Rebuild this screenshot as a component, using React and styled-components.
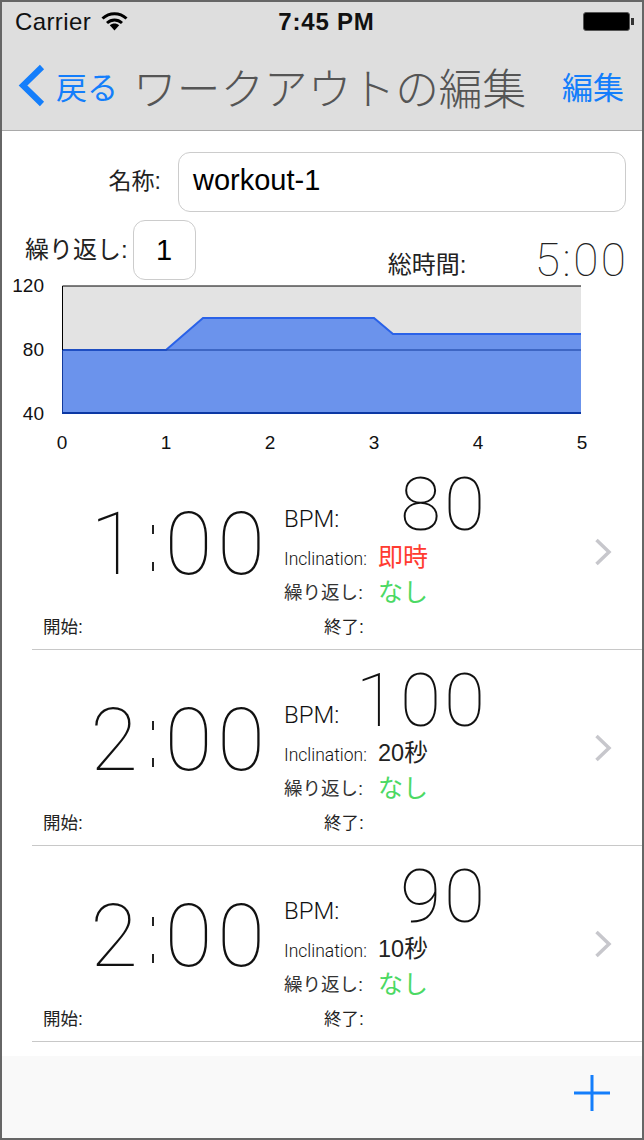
import React from "react";
import styled, { createGlobalStyle } from "styled-components";

const SANS = `"Liberation Sans", "Noto Sans CJK JP", sans-serif`;
const THIN = `Roboto, "Liberation Sans", sans-serif`;

const steps = [
  { time: "1", bpm: "80", incline: "即時", alert: true },
  { time: "2", bpm: "100", incline: "20秒" },
  { time: "2", bpm: "90", incline: "10秒" },
];

const App = () => {
  return (
    <Frame>
      <GlobalStyle />
      <Header>
        <StatusBar>
          <Carrier>
            Carrier
            <svg width="27" height="20" viewBox="0 0 27 20">
              <path d="M1.5 7.5C8.5 1 18.5 1 25.5 7.5" fill="none" stroke="#000" strokeWidth="3" />
              <path d="M6 12C10.5 8 16.5 8 21 12" fill="none" stroke="#000" strokeWidth="3" />
              <path d="M8.8 14.2C11.5 12 15.5 12 18.2 14.2L13.5 19.5Z" fill="#000" />
            </svg>
          </Carrier>
          <Clock>7:45 PM</Clock>
          <Battery />
        </StatusBar>
        <NavBar>
          <BackLink>
            <svg width="28" height="43" viewBox="0 0 28 43">
              <path d="M24 3L5 21.5L24 40" fill="none" stroke="#147efb" strokeWidth="6" />
            </svg>
            <span>戻る</span>
          </BackLink>
          <Title>ワークアウトの編集</Title>
          <EditLink>編集</EditLink>
        </NavBar>
      </Header>

      <Content>
        <NameRow>
          <Label>名称:</Label>
          <NameInput>workout-1</NameInput>
        </NameRow>
        <RepeatRow>
          <RepeatLabelWide>繰り返し:</RepeatLabelWide>
          <RepeatInput>1</RepeatInput>
          <TotalLabel>総時間:</TotalLabel>
          <TotalTime>5:00</TotalTime>
        </RepeatRow>
        <Chart />
        {steps.map((step, i) => (
          <StepRow key={i} {...step} />
        ))}
      </Content>

      <Toolbar>
        <svg width="36" height="36" viewBox="0 0 36 36">
          <path d="M18 0V36M0 18H36" stroke="#147efb" strokeWidth="3" />
        </svg>
      </Toolbar>
    </Frame>
  );
};

const Chart = () => {
  const ticks = [0, 1, 2, 3, 4, 5];
  return (
    <ChartSvg width="640" height="170" viewBox="0 0 640 170">
      <rect x="60" y="2" width="519" height="127" fill="#e3e3e3" />
      <path d="M60 66H164L201 34H372L391 50H579V129H60Z" fill="#6b93ec" />
      <path d="M60 66H164L201 34H372L391 50H579" fill="none" stroke="#2a62e8" strokeWidth="2" />
      <path d="M60 66H579" stroke="#123a9c" strokeWidth="1" />
      <path d="M60.5 2H579M60.5 2V66" fill="none" stroke="#000" strokeWidth="1" />
      <path d="M60.5 66V129" stroke="#123a9c" strokeWidth="1" />
      <path d="M60 129H579" stroke="#0b37a3" strokeWidth="2" />
      <AxisText x="42" y="8" textAnchor="end">120</AxisText>
      <AxisText x="42" y="72" textAnchor="end">80</AxisText>
      <AxisText x="42" y="136" textAnchor="end">40</AxisText>
      {ticks.map((t) => (
        <AxisText key={t} x={60 + t * 104} y="165" textAnchor="middle">
          {t}
        </AxisText>
      ))}
    </ChartSvg>
  );
};

const StepRow = ({ time, bpm, incline, alert }) => {
  return (
    <Row>
      <RowMain>
        <TimeText>
          {time}
          <TimeColon />
          00
        </TimeText>
        <Details>
          <BpmLine>
            <BpmLabel>BPM:</BpmLabel>
            <BpmValue>{bpm}</BpmValue>
          </BpmLine>
          <DetailLine>
            <InclineLabel>Inclination:</InclineLabel>
            <DetailValue $color={alert ? "#ff3b30" : "#222"} $small={!alert}>
              {incline}
            </DetailValue>
          </DetailLine>
          <DetailLine>
            <RepeatLabel>繰り返し:</RepeatLabel>
            <RepeatValue $color="#4cd964">なし</RepeatValue>
          </DetailLine>
        </Details>
        <Chevron width="18" height="28" viewBox="0 0 18 28">
          <path d="M2.5 2L15 14L2.5 26" fill="none" stroke="#c7c7cc" strokeWidth="3.5" />
        </Chevron>
      </RowMain>
      <RowFooter>
        <FooterLabel>開始:</FooterLabel>
        <FooterLabel>終了:</FooterLabel>
      </RowFooter>
    </Row>
  );
};

export default App;

// STYLES
const GlobalStyle = createGlobalStyle`
  html, body {
    margin: 0;
    padding: 0;
    background: #fff;
  }
`;

const Frame = styled.div`
  box-sizing: border-box;
  width: 644px;
  height: 1140px;
  border: 2px solid #666;
  display: flex;
  flex-direction: column;
  font-family: ${SANS};
  color: #111;
  overflow: hidden;
`;

const Header = styled.header`
  flex: none;
  box-sizing: border-box;
  height: 129px;
  background: #dedede;
  border-bottom: 1px solid #a9a9a9;
`;

const StatusBar = styled.div`
  height: 40px;
  padding: 0 10px 0 13px;
  display: grid;
  grid-template-columns: 1fr auto 1fr;
  align-items: center;
`;

const Carrier = styled.div`
  display: flex;
  align-items: center;
  gap: 10px;
  font-size: 24px;
  letter-spacing: 0.4px;
  svg {
    margin-top: -3px;
  }
`;

const Clock = styled.div`
  font-size: 24px;
  font-weight: 700;
  letter-spacing: 0.8px;
  margin-left: 6px;
`;

const Battery = styled.div`
  justify-self: end;
  position: relative;
  box-sizing: border-box;
  width: 47px;
  height: 19px;
  margin: -2px 2px 0 0;
  background: #000;
  border: 1px solid #555;
  border-radius: 3px;
  &::after {
    content: "";
    position: absolute;
    right: -5px;
    top: 5px;
    width: 3px;
    height: 7px;
    background: #333;
  }
`;

const NavBar = styled.nav`
  height: 87px;
  padding: 0 18px 0 16px;
  display: flex;
  align-items: center;
`;

const BackLink = styled.div`
  display: flex;
  align-items: center;
  gap: 10px;
  width: 115px;
  color: #147efb;
  font-size: 31px;
  white-space: nowrap;
`;

const Title = styled.h1`
  margin: 0;
  flex: 1;
  font-size: 43.7px;
  font-weight: 300;
  color: #555;
  white-space: nowrap;
`;

const EditLink = styled.div`
  color: #147efb;
  font-size: 31px;
`;

const Content = styled.main`
  flex: 1;
  background: #fff;
  display: flex;
  flex-direction: column;
  min-height: 0;
`;

const NameRow = styled.div`
  margin-top: 21px;
  padding: 0 16px 0 0;
  display: flex;
  align-items: center;
  justify-content: flex-end;
  gap: 17px;
`;

const Label = styled.span`
  font-size: 23px;
  color: #222;
  margin-top: -6px;
`;

const RepeatLabelWide = styled(Label)`
  font-size: 24px;
  margin-top: -6px;
`;

const NameInput = styled.div`
  box-sizing: border-box;
  width: 448px;
  height: 60px;
  padding: 0 14px 3px;
  border: 1px solid #ccc;
  border-radius: 12px;
  display: flex;
  align-items: center;
  font-size: 29px;
  color: #000;
`;

const RepeatRow = styled.div`
  margin-top: 8px;
  padding: 0 16px 0 23px;
  height: 60px;
  display: flex;
  align-items: center;
`;

const RepeatInput = styled.div`
  box-sizing: border-box;
  width: 63px;
  height: 60px;
  margin-left: 5px;
  border: 1px solid #ccc;
  border-radius: 12px;
  display: flex;
  align-items: center;
  justify-content: center;
  font-size: 29px;
  color: #000;
`;

const TotalLabel = styled.span`
  margin: 25px 0 0 192px;
  font-size: 24px;
  color: #222;
`;

const TotalTime = styled.span`
  margin: 0 -2.5px 0 auto;
  padding-top: 20px;
  font-family: ${THIN};
  font-size: 46px;
  font-weight: 100;
  letter-spacing: 2.5px;
  color: #222;
`;

const ChartSvg = styled.svg`
  display: block;
  margin-top: 4px;
  flex: none;
  overflow: visible;
`;

const AxisText = styled.text`
  font-family: ${SANS};
  font-size: 19px;
  fill: #111;
`;

const Row = styled.section`
  box-sizing: border-box;
  flex: none;
  height: 196px;
  margin-left: 30px;
  border-bottom: 1px solid #c8c8c8;
  display: flex;
  flex-direction: column;
`;

const RowMain = styled.div`
  height: 159px;
  display: flex;
  align-items: center;
  padding-right: 30px;
`;

const TimeText = styled.div`
  flex: none;
  width: 238px;
  display: flex;
  justify-content: flex-end;
  align-items: center;
  margin-top: 20px;
  font-family: ${THIN};
  font-size: 87px;
  font-weight: 100;
  letter-spacing: 5px;
  color: #111;
`;

const TimeColon = styled.span`
  width: 2px;
  height: 46px;
  margin: 8px 11px 0 9px;
  background: linear-gradient(#222 0 9px, transparent 9px 37px, #222 37px);
`;

const Details = styled.div`
  flex: 1;
  margin-left: 14px;
  display: flex;
  flex-direction: column;
`;

const BpmLine = styled.div`
  height: 83px;
  display: flex;
  align-items: baseline;
`;

const BpmLabel = styled.span`
  align-self: flex-start;
  margin-top: 45px;
  font-family: ${THIN};
  font-size: 24px;
  font-weight: 300;
  width: 110px;
  color: #111;
`;

const BpmValue = styled.span`
  width: 94px;
  margin-top: 14px;
  display: flex;
  justify-content: flex-end;
  font-family: ${THIN};
  font-size: 75px;
  line-height: 60px;
  font-weight: 100;
  letter-spacing: 3px;
  color: #111;
`;

const DetailLine = styled.div`
  height: 32px;
  display: flex;
  align-items: center;
`;

const InclineLabel = styled.span`
  width: 94px;
  font-family: ${THIN}, "Noto Sans CJK JP";
  font-size: 17.5px;
  font-weight: 300;
  color: #111;
`;

const RepeatLabel = styled.span`
  width: 94px;
  font-size: 18.5px;
  color: #333;
`;

const DetailValue = styled.span`
  margin-top: -9px;
  font-size: ${(p) => (p.$small ? "23.5px" : "25px")};
  color: ${(p) => p.$color};
`;

const RepeatValue = styled(DetailValue)`
  margin-top: -3px;
`;

const Chevron = styled.svg`
  flex: none;
  margin-top: 36px;
`;

const RowFooter = styled.div`
  padding-left: 11px;
  display: flex;
  span:first-child {
    width: 281px;
  }
`;

const FooterLabel = styled.span`
  font-size: 17.5px;
  color: #222;
`;

const Toolbar = styled.footer`
  flex: none;
  height: 82px;
  padding: 0 32px 8px 0;
  box-sizing: border-box;
  background: #f9f9f9;
  display: flex;
  align-items: center;
  justify-content: flex-end;
`;
